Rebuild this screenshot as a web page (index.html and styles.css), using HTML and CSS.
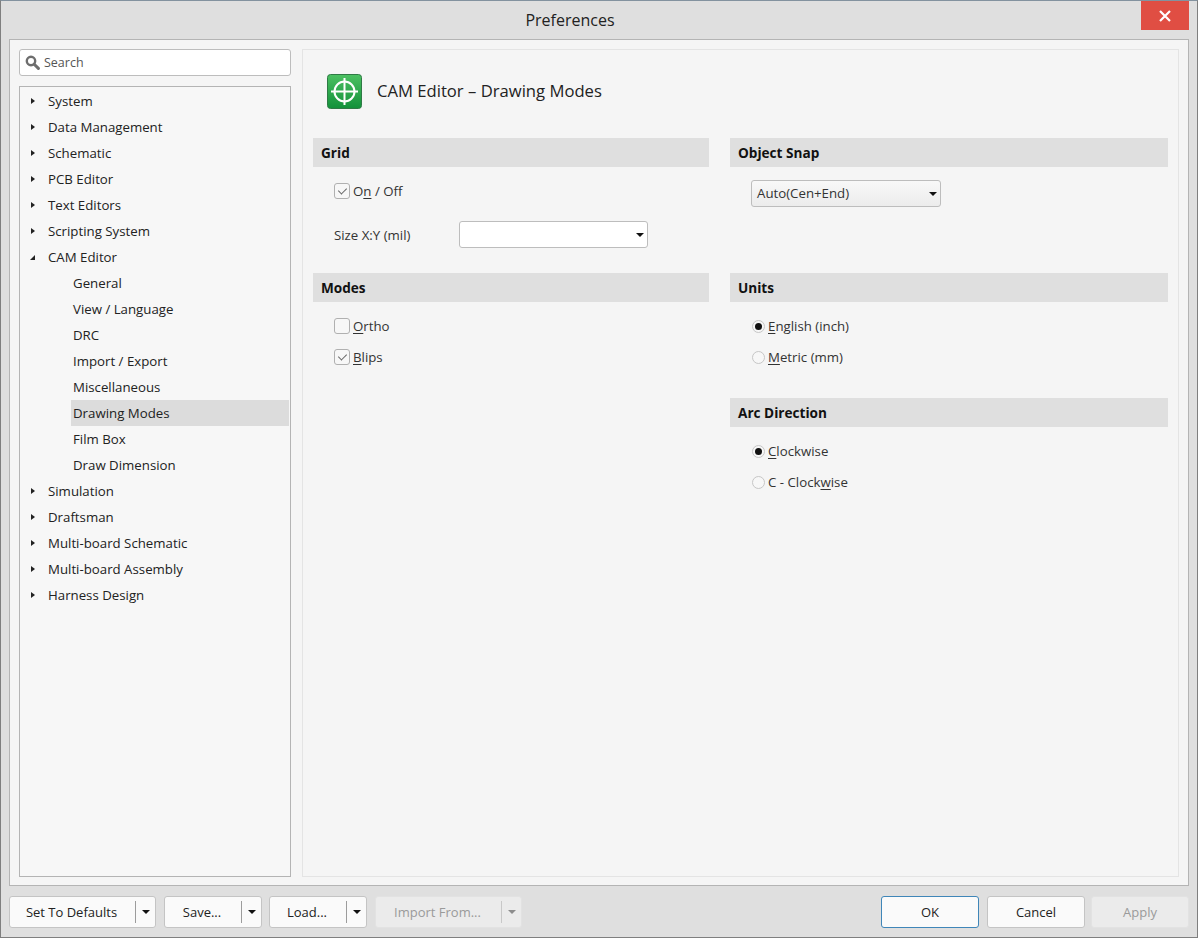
FILE: index.html
```html
<!DOCTYPE html>
<html lang="en">
<head>
<meta charset="UTF-8">
<title>Preferences</title>
<link rel="stylesheet" href="styles.css">
</head>
<body>

<div class="window">
  <div class="titlebar">
    <div class="title">Preferences</div>
    <div class="close">
      <svg width="12" height="12" viewBox="0 0 12 12"><path d="M1 1 L11 11 M11 1 L1 11" stroke="#fff" stroke-width="2.2" fill="none"/></svg>
    </div>
  </div>

  <div class="main">
    <div class="sidebar">
      <div class="search">
        <svg width="15" height="15" viewBox="0 0 15 15"><circle cx="6" cy="6" r="4.2" fill="none" stroke="#6e6e6e" stroke-width="2.4"/><path d="M9.2 9.2 L13.4 13.4" stroke="#6e6e6e" stroke-width="3" stroke-linecap="round"/></svg>
        <span>Search</span>
      </div>
      <div class="tree">
        <div class="row"><i class="arrow"></i>System</div>
        <div class="row"><i class="arrow"></i>Data Management</div>
        <div class="row"><i class="arrow"></i>Schematic</div>
        <div class="row"><i class="arrow"></i>PCB Editor</div>
        <div class="row"><i class="arrow"></i>Text Editors</div>
        <div class="row"><i class="arrow"></i>Scripting System</div>
        <div class="row"><i class="arrow open"></i>CAM Editor</div>
        <div class="row child">General</div>
        <div class="row child">View / Language</div>
        <div class="row child">DRC</div>
        <div class="row child">Import / Export</div>
        <div class="row child">Miscellaneous</div>
        <div class="row child selected">Drawing Modes</div>
        <div class="row child">Film Box</div>
        <div class="row child">Draw Dimension</div>
        <div class="row"><i class="arrow"></i>Simulation</div>
        <div class="row"><i class="arrow"></i>Draftsman</div>
        <div class="row"><i class="arrow"></i>Multi-board Schematic</div>
        <div class="row"><i class="arrow"></i>Multi-board Assembly</div>
        <div class="row"><i class="arrow"></i>Harness Design</div>
      </div>
    </div>

    <div class="panel">
      <div class="panel-head">
        <svg width="35" height="35" viewBox="0 0 35 35">
          <defs><linearGradient id="green" x1="0" y1="0" x2="0" y2="1"><stop offset="0" stop-color="#4cc062"/><stop offset="1" stop-color="#12913a"/></linearGradient></defs>
          <rect x="0.5" y="0.5" width="34" height="34" rx="3" fill="url(#green)" stroke="#2f7a45"/>
          <circle cx="17.5" cy="17.5" r="10" fill="none" stroke="#fff" stroke-width="2"/>
          <path d="M17.5 4 V31 M4 17.5 H31" stroke="#fff" stroke-width="2"/>
        </svg>
        <h1>CAM Editor – Drawing Modes</h1>
      </div>

      <div class="columns">
        <div class="col">
          <h2>Grid</h2>
          <div class="grid-body">
            <label class="check-line"><span class="check on"></span><span>O<u>n</u> / Off</span></label>
            <div class="size-line">
              <span class="size-label">Size X:Y (mil)</span>
              <div class="select blank"><i class="caret"></i></div>
            </div>
          </div>
          <h2>Modes</h2>
          <div class="opts">
            <label class="check-line"><span class="check"></span><span><u>O</u>rtho</span></label>
            <label class="check-line"><span class="check on"></span><span><u>B</u>lips</span></label>
          </div>
        </div>

        <div class="col">
          <h2>Object Snap</h2>
          <div class="snap-body">
            <div class="select"><span class="select-text">Auto(Cen+End)</span><i class="caret"></i></div>
          </div>
          <h2>Units</h2>
          <div class="opts radios">
            <label class="radio-line"><span class="radio on"></span><span><u>E</u>nglish (inch)</span></label>
            <label class="radio-line"><span class="radio"></span><span><u>M</u>etric (mm)</span></label>
          </div>
          <h2>Arc Direction</h2>
          <div class="opts radios">
            <label class="radio-line"><span class="radio on"></span><span><u>C</u>lockwise</span></label>
            <label class="radio-line"><span class="radio"></span><span>C - Clock<u>w</u>ise</span></label>
          </div>
        </div>
      </div>
    </div>
  </div>

  <div class="footer">
    <div class="btn split defaults"><span>Set To Defaults</span><i class="caret"></i></div>
    <div class="btn split"><span>Save...</span><i class="caret"></i></div>
    <div class="btn split load"><span>Load...</span><i class="caret"></i></div>
    <div class="btn split import disabled"><span>Import From...</span><i class="caret"></i></div>
    <div class="spacer"></div>
    <div class="btn plain primary">OK</div>
    <div class="btn plain">Cancel</div>
    <div class="btn plain disabled apply">Apply</div>
  </div>
</div>

</body>
</html>
```

FILE: styles.css
```css
* { box-sizing: border-box; }
body { margin: 0; font-family: "Open Sans", "Noto Sans", sans-serif; font-size: 13.25px; color: #222; }

.window { width: 1198px; height: 938px; background: #dfdfdf; border: 1px solid #7f7f7f; border-top-color: #83929f; display: flex; flex-direction: column; }

.titlebar { height: 38px; display: flex; align-items: flex-start; flex-shrink: 0; }
.title { flex: 1; padding-right: 2px; text-align: center; font-size: 16px; line-height: 38px; color: #222; }
.close { width: 48px; height: 29px; margin-right: 8px; background: #e04e43; display: flex; align-items: center; justify-content: center; }

.main { width: 1180px; height: 847px; margin-left: 8px; background: #f5f5f5; border: 1px solid #b4b4b4; padding: 9px 9px 8px 9px; display: flex; gap: 11px; }

.sidebar { width: 272px; display: flex; flex-direction: column; gap: 10px; }
.search { height: 27px; background: #fff; border: 1px solid #bdbdbd; border-radius: 3px; display: flex; align-items: center; gap: 4px; padding-left: 5px; color: #555; font-size: 12.5px; }
.tree { flex: 1; border: 1px solid #b4b4b4; background: #f7f7f7; padding: 1px; }
.row { height: 26px; line-height: 26px; position: relative; padding-left: 27px; white-space: nowrap; }
.row.child { margin-left: 50px; padding-left: 2px; margin-right: 0; }
.row.selected { background: #dcdcdc; }
.arrow { position: absolute; left: 10px; top: 10px; width: 0; height: 0; border-left: 4px solid #222; border-top: 3.5px solid transparent; border-bottom: 3.5px solid transparent; }
.arrow.open { left: 9px; top: 11px; border: 0; border-right: 5px solid #222; border-top: 5px solid transparent; }

.panel { flex: 1; border: 1px solid #e4e4e4; padding: 0 10px; }
.panel-head { height: 88px; display: flex; align-items: center; padding: 0 0 5px 14px; gap: 15px; }
h1 { margin: 0 0 2px; font-size: 16.65px; font-weight: 400; color: #222; }

.columns { display: grid; grid-template-columns: 396px 438px; gap: 21px; }
h2 { margin: 0; height: 29px; line-height: 30px; padding-left: 8px; background: #dfdfdf; font-size: 13.6px; font-weight: 700; color: #111; }

.grid-body { height: 106px; padding: 16px 0 0 21px; }
.snap-body { height: 106px; padding: 13px 0 0 21px; }
.opts { padding: 16px 0 0 21px; display: flex; flex-direction: column; gap: 15px; }
.radios { height: 96px; }

.check-line, .radio-line { display: flex; align-items: center; height: 16px; line-height: 16px; color: #333; }
.check { width: 16px; height: 16px; border: 1px solid #b0b0b0; border-radius: 3px; background: #f7f7f7; margin-right: 3px; position: relative; flex-shrink: 0; }
.check.on::after { content: ""; position: absolute; left: 5px; top: 2px; width: 4px; height: 7px; border-right: 1px solid #666; border-bottom: 1px solid #666; transform: rotate(45deg); }
.radio { width: 13px; height: 13px; margin: 0 3px 0 1px; border: 1px solid #c6c6c6; border-radius: 50%; background: #f7f7f7; position: relative; flex-shrink: 0; }
.radio.on::after { content: ""; position: absolute; left: 2px; top: 2px; width: 7px; height: 7px; border-radius: 50%; background: #111; }
u { text-underline-offset: 2px; }

.size-line { display: flex; align-items: center; margin-top: 22px; }
.size-label { width: 125px; color: #333; }
.select { width: 190px; height: 27px; border: 1px solid #bdbdbd; border-radius: 3px; background: linear-gradient(#f8f8f8, #ececec); display: flex; align-items: center; justify-content: space-between; padding: 0 3px 0 5px; color: #333; }
.select-text { position: relative; top: -1px; }
.select.blank { width: 189px; background: #fff; justify-content: flex-end; }
.caret { width: 0; height: 0; flex-shrink: 0; border-top: 4px solid #111; border-left: 4.5px solid transparent; border-right: 4.5px solid transparent; }

.footer { flex: 1; display: flex; align-items: flex-start; padding: 10px 8px 0 8px; gap: 8px; font-size: 13px; }
.btn { height: 32px; background: #fafafa; border: 1px solid #c4c4c4; border-radius: 3px; color: #222; display: flex; align-items: center; }
.split { width: 98px; padding-right: 5px; }
.split span { flex: 1; height: 22px; line-height: 22px; text-align: center; padding-right: 2px; border-right: 1px solid #9c9c9c; margin-right: 6px; }
.defaults { width: 147px; }
.load { margin-left: -1px; }
.import { width: 147px; }
.plain { width: 98px; justify-content: center; }
.primary { border-color: #3f86b8; }
.disabled { background: #ebebeb; border-color: #e2e2e2; color: #9a9a9a; }
.disabled .caret { border-top-color: #8c8c8c; }
.import span { border-right-color: #c8c8c8; }
.spacer { flex: 1; }
.apply { margin-left: -2px; }
```
